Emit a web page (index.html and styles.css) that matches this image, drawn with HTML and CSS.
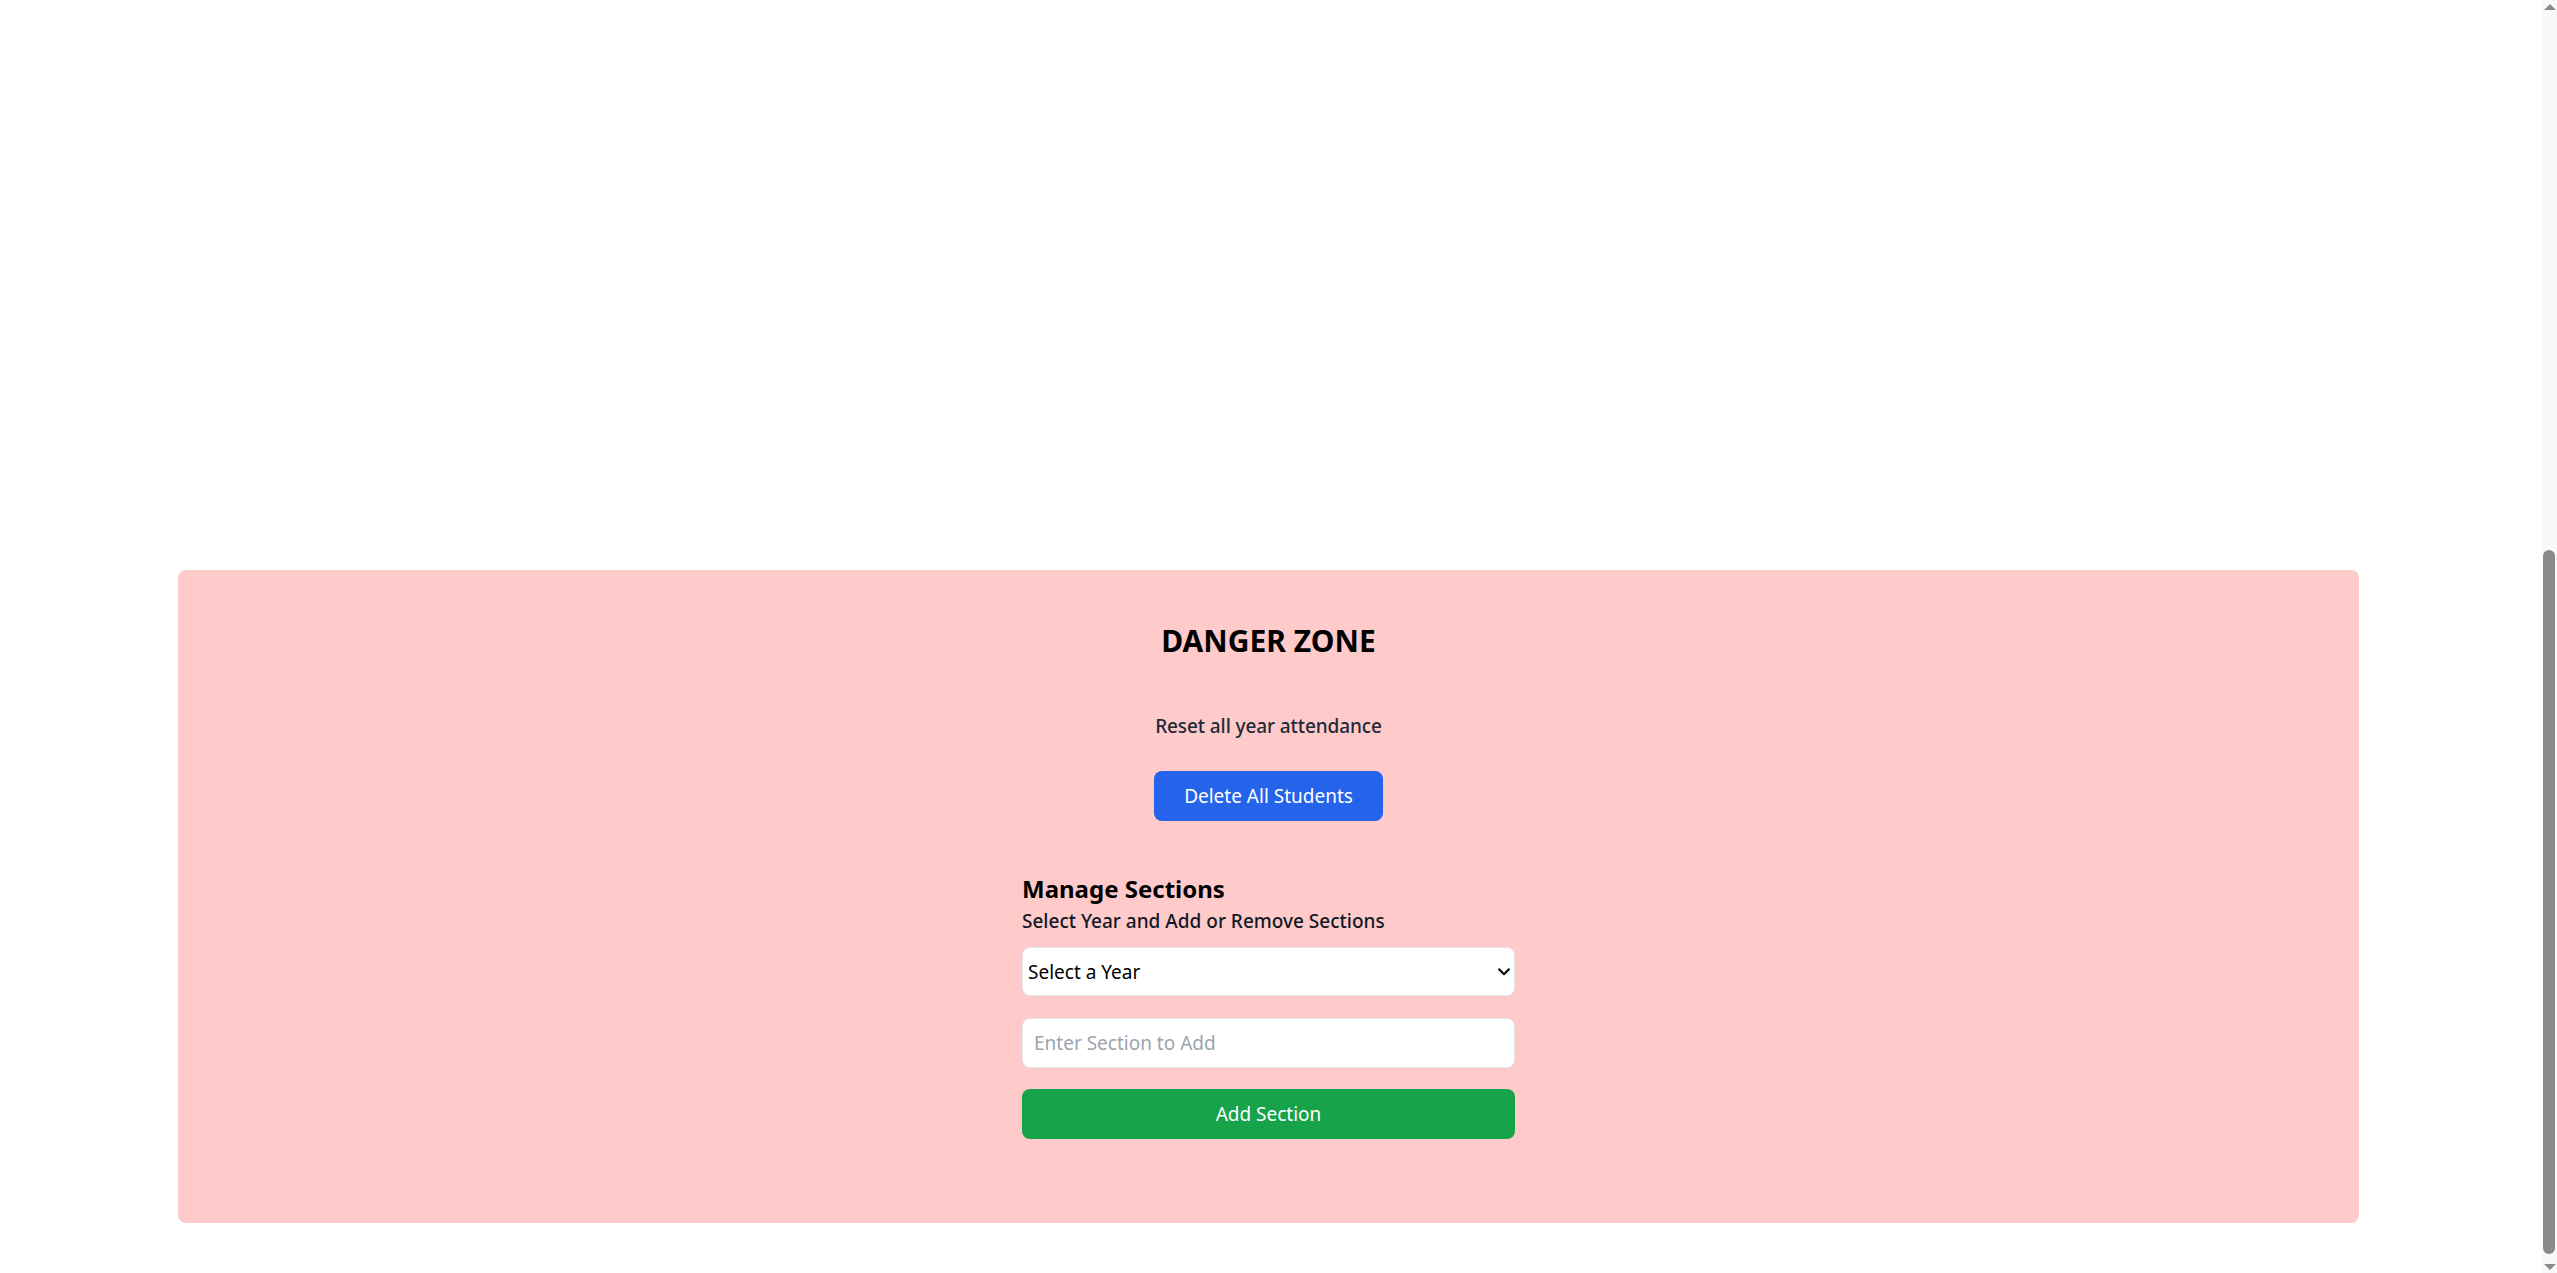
FILE: index.html
```html
<!DOCTYPE html>
<html lang="en">
<head>
<meta charset="utf-8">
<title>Danger Zone</title>
<link rel="stylesheet" href="styles.css">
</head>
<body>
<div class="page">
  <div class="blank-area"></div>
  <section class="danger-panel">
    <h2 class="danger-title">DANGER ZONE</h2>
    <p class="danger-text">Reset all year attendance</p>
    <button class="btn btn-blue" type="button">Delete All Students</button>
    <div class="manage">
      <h3 class="manage-title">Manage Sections</h3>
      <p class="manage-sub">Select Year and Add or Remove Sections</p>
      <div class="select-wrap">
        <select class="field select-field">
          <option>Select a Year</option>
        </select>
        <svg class="chevron" width="12" height="8" viewBox="0 0 12 8"><path d="M1.2 1.4 L6 6.2 L10.8 1.4" fill="none" stroke="#111" stroke-width="2.2" stroke-linecap="round" stroke-linejoin="round"/></svg>
      </div>
      <input class="field input-field" type="text" placeholder="Enter Section to Add">
      <button class="btn btn-green" type="button">Add Section</button>
    </div>
  </section>
</div>
<div class="scrollbar">
  <span class="sb-up"></span>
  <span class="sb-thumb"></span>
  <span class="sb-down"></span>
</div>
</body>
</html>
```

FILE: styles.css
```css
html, body {
  margin: 0;
  padding: 0;
  background: #ffffff;
  overflow: hidden;
}
body {
  font-family: "Noto Sans", "Open Sans", sans-serif;
  color: #000;
}
.page {
  padding: 0 198px 0 178px;
}
.blank-area {
  height: 570px;
}
.danger-panel {
  background: #fecaca;
  border-radius: 8px;
  padding: 51px 0 84px;
  text-align: center;
}
.danger-title {
  margin: 0;
  font-size: 30px;
  line-height: 40px;
  font-weight: 700;
}
.danger-text {
  margin: 51px 0 0;
  font-size: 19px;
  line-height: 28px;
  font-weight: 500;
  letter-spacing: -0.1px;
  color: #1f2937;
}
.btn {
  display: inline-block;
  border: 0;
  border-radius: 8px;
  height: 50px;
  font-family: inherit;
  font-size: 19px;
  color: #fff;
  cursor: pointer;
}
.btn-blue {
  margin-top: 31px;
  padding: 0 30px;
  background: #2563eb;
}
.manage {
  width: 493px;
  margin: 52px auto 0;
  text-align: left;
}
.manage-title {
  margin: 0;
  font-size: 24px;
  line-height: 32px;
  font-weight: 700;
}
.manage-sub {
  margin: 2px 0 0;
  font-size: 19px;
  line-height: 28px;
  font-weight: 500;
  color: #111827;
}
.select-wrap {
  position: relative;
  margin-top: 12px;
}
.field {
  display: block;
  box-sizing: border-box;
  width: 100%;
  height: 49px;
  border: 1px solid #e5e7eb;
  border-radius: 8px;
  background: #fff;
  font-family: inherit;
  font-size: 19px;
  color: #000;
  outline: none;
}
.select-field {
  appearance: none;
  -webkit-appearance: none;
  padding: 0 30px 0 5px;
}
.chevron {
  position: absolute;
  right: 5px;
  top: 21px;
}
.input-field {
  margin-top: 22px;
  height: 50px;
  padding: 0 11px;
}
.input-field::placeholder {
  color: #9ca3af;
}
.btn-green {
  display: block;
  width: 100%;
  margin-top: 21px;
  background: #16a34a;
}
.scrollbar {
  position: fixed;
  top: 0;
  right: 0;
  width: 15px;
  height: 100%;
  background: #f9f9f9;
}
.sb-up, .sb-down {
  position: absolute;
  left: 2px;
  width: 0;
  height: 0;
  border-left: 6px solid transparent;
  border-right: 6px solid transparent;
}
.sb-up {
  top: 4px;
  border-bottom: 6px solid #8a8a8a;
}
.sb-down {
  bottom: 3px;
  border-top: 6px solid #8a8a8a;
}
.sb-thumb {
  position: absolute;
  left: 1px;
  width: 12px;
  top: 550px;
  height: 704px;
  background: #8a8a8a;
  border-radius: 6px;
}
```
